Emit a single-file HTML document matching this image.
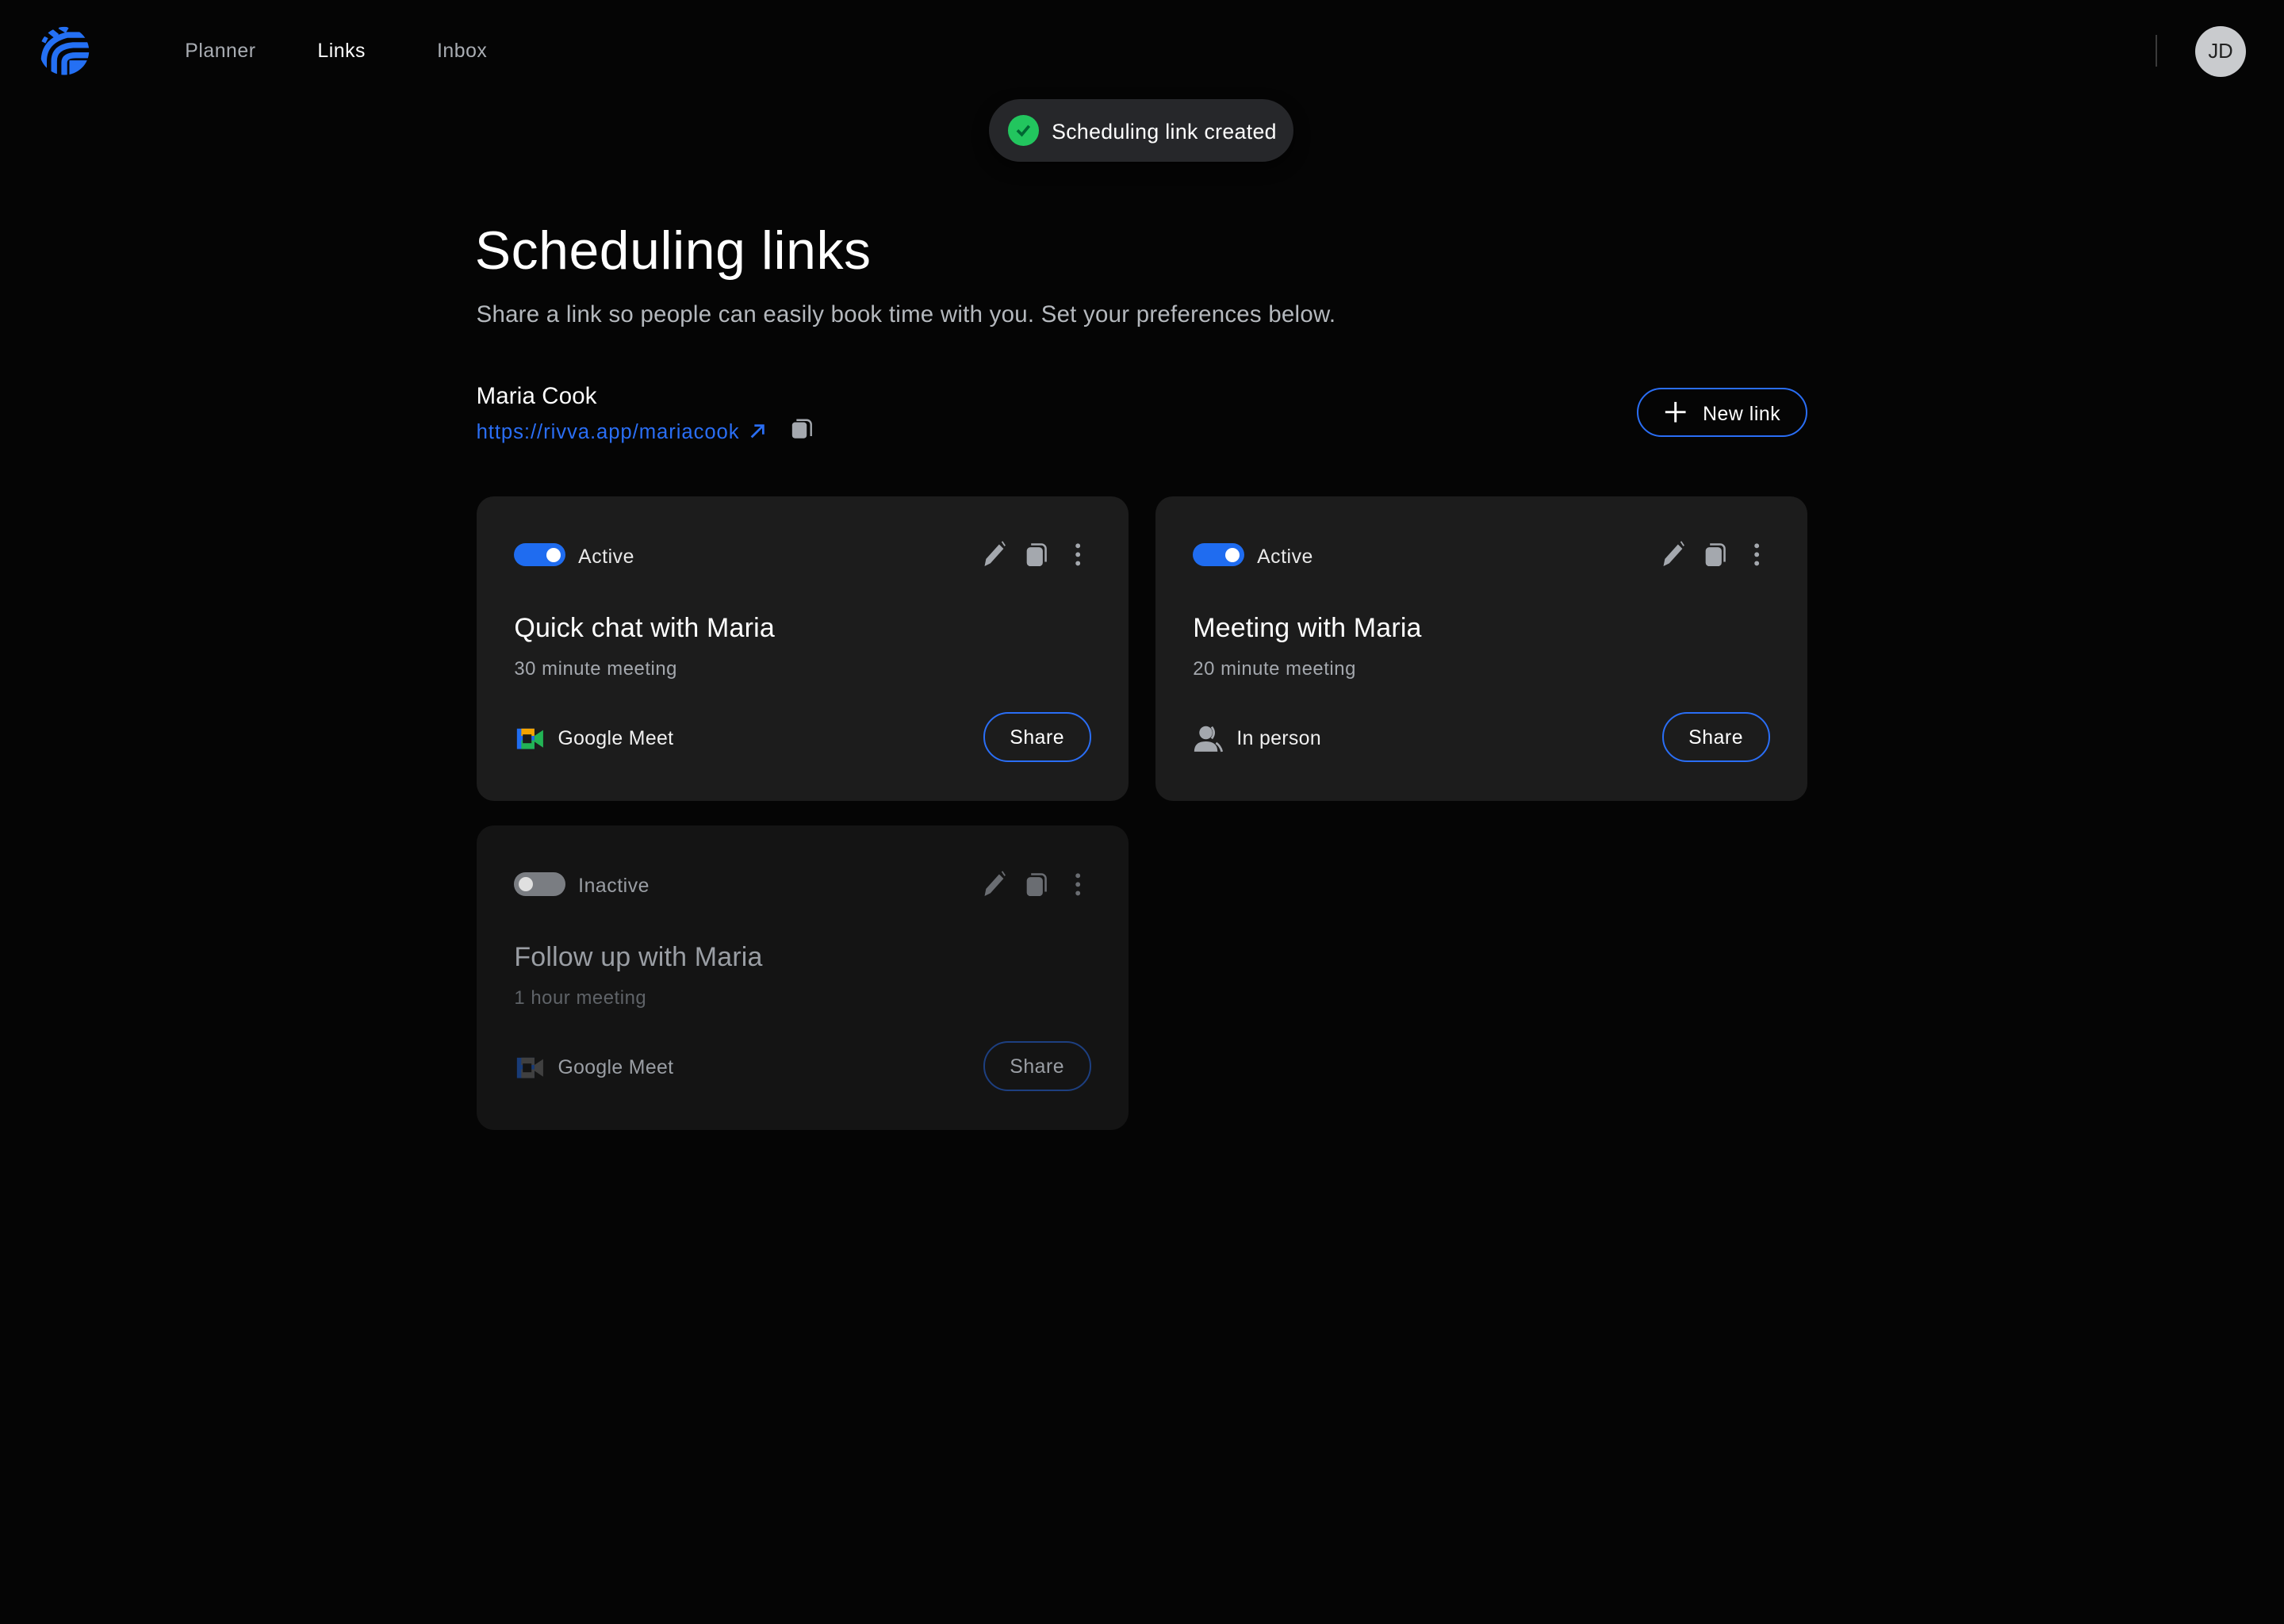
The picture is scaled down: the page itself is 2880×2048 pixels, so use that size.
<!DOCTYPE html>
<html><head><meta charset="utf-8"><style>
html,body{margin:0;padding:0;background:#050505;}
body{width:2880px;height:2048px;overflow:hidden;}
#r{zoom:1.8367;width:1568px;height:1115px;position:relative;font-family:"Liberation Sans",sans-serif;color:#fff;}
.a{position:absolute;white-space:nowrap;}
.nav{font-size:13.5px;color:#a9adb3;top:28px;letter-spacing:.3px}
.card{position:absolute;width:448px;height:209px;border-radius:12px;background:#1c1c1c;}
.tog{position:absolute;left:26px;top:32px;width:35px;height:16px;border-radius:8px;background:#1f6cf0;}
.tog i{position:absolute;right:3px;top:3px;width:10px;height:10px;border-radius:50%;background:#fff}
.st{position:absolute;left:70px;top:34px;font-size:13.5px;color:#e8e8e8;letter-spacing:.3px}
.ct{position:absolute;left:26px;top:80px;font-size:18.5px;letter-spacing:.1px}
.cs{position:absolute;left:26px;top:111px;font-size:13px;color:#a4a8ae;letter-spacing:.3px}
.loc{position:absolute;left:56px;top:159px;font-size:13.5px;color:#f0f0f0;letter-spacing:.2px}
.sh{position:absolute;left:348px;top:148px;width:74px;height:34px;border:1.5px solid #2a6ef5;border-radius:17px;box-sizing:border-box;text-align:center;line-height:34px;font-size:13.5px;letter-spacing:.3px}
.ic{position:absolute;top:30px}
</style></head><body><div id="r">
<svg class="a" style="left:26px;top:18px" width="36" height="34" viewBox="0 0 36 34"><defs><clipPath id="c"><ellipse cx="18" cy="17" rx="17" ry="16.5"/></clipPath></defs><g clip-path="url(#c)" fill="none" stroke="#2470f4" stroke-width="4"><path d="M2 8 L6 10"/><path d="M8 3 L13 7"/><path d="M15 0 L20 3"/><path d="M4 40 V24 Q4 10 20 6 H40"/><path d="M11 40 V24 Q11 14 24 13 H40"/><path d="M18 40 V25 Q18 20 26 20 H40"/><path d="M25 40 V27 H40" stroke-width="7"/></g></svg>
<div class="a nav" style="left:127px">Planner</div>
<div class="a nav" style="left:218px;color:#fff">Links</div>
<div class="a nav" style="left:300px">Inbox</div>
<div class="a" style="left:1480px;top:24px;width:1px;height:22px;background:#3a3a3a"></div>
<div class="a" style="left:1507px;top:18px;width:35px;height:35px;border-radius:50%;background:#c9cbce;color:#222;font-size:14px;text-align:center;line-height:35px">JD</div>
<div class="a" style="left:679px;top:68px;width:209px;height:43px;border-radius:22px;background:#26272a;box-shadow:0 4px 10px rgba(0,0,0,.6)"></div>
<div class="a" style="left:692px;top:79px;width:21px;height:21px;border-radius:50%;background:#22c55e"></div>
<svg class="a" style="left:692px;top:79px" width="21" height="21"><path d="M6.5 10.5l3 3 5-6" stroke="#063" stroke-width="2" fill="none"/></svg>
<div class="a" style="left:722px;top:82px;font-size:14.5px;letter-spacing:.2px">Scheduling link created</div>
<div class="a" style="left:326px;top:151px;font-size:37px;letter-spacing:.3px">Scheduling links</div>
<div class="a" style="left:327px;top:207px;font-size:16px;color:#b4b8bd;letter-spacing:.15px">Share a link so people can easily book time with you. Set your preferences below.</div>
<div class="a" style="left:327px;top:263px;font-size:16px;letter-spacing:.1px">Maria Cook</div>
<div class="a" style="left:327px;top:289px;font-size:14px;color:#2a6ef5;letter-spacing:.5px">https://rivva.app/mariacook</div>
<svg class="a" style="left:514px;top:290px" width="12" height="12"><path d="M2 10L10 2M4 2h6v6" stroke="#2a6ef5" stroke-width="1.5" fill="none"/></svg>
<svg class="a" style="left:543px;top:287px" width="16" height="16"><rect x="1" y="3" width="10" height="11" rx="2" fill="#a4a8ae"/><path d="M4 1.5h7a3 3 0 0 1 3 3v8" stroke="#a4a8ae" stroke-width="1.3" fill="none"/></svg>
<div class="a" style="left:1124px;top:266px;width:117px;height:34px;border:1.5px solid #2a6ef5;border-radius:17px;box-sizing:border-box"></div>
<svg class="a" style="left:1142px;top:275px" width="16" height="16"><path d="M8 1v14M1 8h14" stroke="#fff" stroke-width="1.6"/></svg>
<div class="a" style="left:1169px;top:277px;font-size:13.5px;letter-spacing:.3px">New link</div>

<div class="card" style="left:327px;top:341px">
<div class="tog"><i></i></div><div class="st">Active</div>
<svg class="ic" style="left:346px" width="20" height="20"><path d="M3 18l1-5 9-10 3 3-9 10z" fill="#a4a8ae"/><path d="M15 1l2 3" stroke="#a4a8ae"/></svg>
<svg class="ic" style="left:376px" width="18" height="20"><rect x="2" y="5" width="11" height="13" rx="2.5" fill="#a4a8ae"/><path d="M5 3h7a3 3 0 0 1 3 3v9" stroke="#a4a8ae" stroke-width="1.4" fill="none"/></svg>
<svg class="ic" style="left:408px" width="10" height="20"><circle cx="5" cy="4" r="1.6" fill="#a4a8ae"/><circle cx="5" cy="10" r="1.6" fill="#a4a8ae"/><circle cx="5" cy="16" r="1.6" fill="#a4a8ae"/></svg>
<div class="ct">Quick chat with Maria</div><div class="cs">30 minute meeting</div>
<svg class="a" style="left:27px;top:158px" width="20" height="16"><rect x="1" y="1" width="12" height="14" fill="#1f6cf0"/><rect x="4" y="1" width="9" height="5" fill="#f5a400"/><rect x="4" y="9" width="9" height="6" fill="#22b455"/><rect x="5" y="5" width="6" height="6" fill="#1c1c1c"/><path d="M13 6l6-4v12l-6-4z" fill="#22b455"/></svg>
<div class="loc">Google Meet</div><div class="sh">Share</div>
</div>

<div class="card" style="left:793px;top:341px">
<div class="tog"><i></i></div><div class="st">Active</div>
<svg class="ic" style="left:346px" width="20" height="20"><path d="M3 18l1-5 9-10 3 3-9 10z" fill="#a4a8ae"/><path d="M15 1l2 3" stroke="#a4a8ae"/></svg>
<svg class="ic" style="left:376px" width="18" height="20"><rect x="2" y="5" width="11" height="13" rx="2.5" fill="#a4a8ae"/><path d="M5 3h7a3 3 0 0 1 3 3v9" stroke="#a4a8ae" stroke-width="1.4" fill="none"/></svg>
<svg class="ic" style="left:408px" width="10" height="20"><circle cx="5" cy="4" r="1.6" fill="#a4a8ae"/><circle cx="5" cy="10" r="1.6" fill="#a4a8ae"/><circle cx="5" cy="16" r="1.6" fill="#a4a8ae"/></svg>
<div class="ct">Meeting with Maria</div><div class="cs">20 minute meeting</div>
<svg class="a" style="left:26px;top:156px" width="22" height="20"><circle cx="9" cy="6" r="4.5" fill="#a4a8ae"/><path d="M1 19q0-7 8-7t8 7z" fill="#a4a8ae"/><path d="M13 2q3 4 0 8M16 13q3 2 4 6" stroke="#a4a8ae" stroke-width="1.5" fill="none"/></svg>
<div class="loc">In person</div><div class="sh">Share</div>
</div>

<div class="card" style="left:327px;top:567px;background:#141414">
<div class="tog" style="background:#7a7d82"><i style="left:3px;right:auto;background:#e0e0e0"></i></div><div class="st" style="color:#9a9ea4">Inactive</div>
<svg class="ic" style="left:346px" width="20" height="20"><path d="M3 18l1-5 9-10 3 3-9 10z" fill="#6a6d72"/><path d="M15 1l2 3" stroke="#6a6d72"/></svg>
<svg class="ic" style="left:376px" width="18" height="20"><rect x="2" y="5" width="11" height="13" rx="2.5" fill="#6a6d72"/><path d="M5 3h7a3 3 0 0 1 3 3v9" stroke="#6a6d72" stroke-width="1.4" fill="none"/></svg>
<svg class="ic" style="left:408px" width="10" height="20"><circle cx="5" cy="4" r="1.6" fill="#6a6d72"/><circle cx="5" cy="10" r="1.6" fill="#6a6d72"/><circle cx="5" cy="16" r="1.6" fill="#6a6d72"/></svg>
<div class="ct" style="color:#9a9ea4">Follow up with Maria</div><div class="cs" style="color:#5f6368">1 hour meeting</div>
<svg class="a" style="left:27px;top:158px" width="20" height="16" opacity=".45"><rect x="1" y="1" width="12" height="14" fill="#1f6cf0"/><rect x="4" y="1" width="9" height="5" fill="#777"/><rect x="4" y="9" width="9" height="6" fill="#777"/><rect x="5" y="5" width="6" height="6" fill="#141414"/><path d="M13 6l6-4v12l-6-4z" fill="#777"/></svg>
<div class="loc" style="color:#9a9ea4">Google Meet</div><div class="sh" style="border-color:#1d3f80;color:#9a9ea4">Share</div>
</div>
</div></body></html>
